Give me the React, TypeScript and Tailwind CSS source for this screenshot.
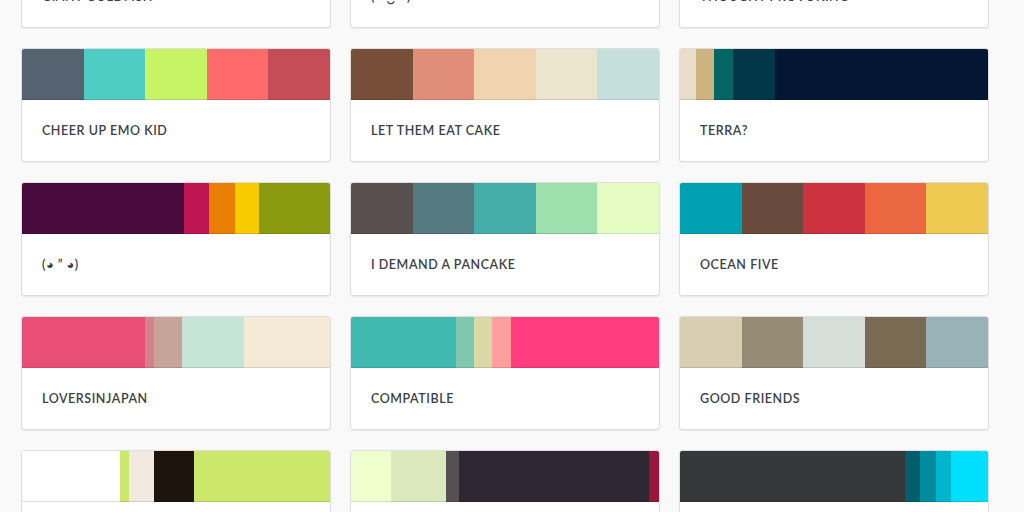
import React from "react";

type Swatch = { c: string; w: number };
type Palette = { name: string; colors: Swatch[] };

const eq = (cs: string[]): Swatch[] => cs.map((c) => ({ c, w: 20 }));

const palettes: Palette[] = [
  { name: "GIANT GOLDFISH", colors: eq(["#69D2E7", "#A7DBD8", "#E0E4CC", "#F38630", "#FA6900"]) },
  { name: "(◕ ‿ ◕)", colors: eq(["#FE4365", "#FC9D9A", "#F9CDAD", "#C8C8A9", "#83AF9B"]) },
  { name: "THOUGHT PROVOKING", colors: eq(["#ECD078", "#D95B43", "#C02942", "#542437", "#53777A"]) },
  { name: "CHEER UP EMO KID", colors: eq(["#556270", "#4ECDC4", "#C7F464", "#FF6B6B", "#C44D58"]) },
  { name: "LET THEM EAT CAKE", colors: eq(["#774F38", "#E08E79", "#F1D4AF", "#ECE5CE", "#C5E0DC"]) },
  {
    name: "TERRA?",
    colors: [
      { c: "#E8DDCB", w: 5.2 },
      { c: "#CDB380", w: 6 },
      { c: "#036564", w: 6 },
      { c: "#033649", w: 13.8 },
      { c: "#031634", w: 69 },
    ],
  },
  {
    name: "(◕ ” ◕)",
    colors: [
      { c: "#490A3D", w: 52.7 },
      { c: "#BD1550", w: 8 },
      { c: "#E97F02", w: 8.4 },
      { c: "#F8CA00", w: 7.9 },
      { c: "#8A9B0F", w: 23 },
    ],
  },
  { name: "I DEMAND A PANCAKE", colors: eq(["#594F4F", "#547980", "#45ADA8", "#9DE0AD", "#E5FCC2"]) },
  { name: "OCEAN FIVE", colors: eq(["#00A0B0", "#6A4A3C", "#CC333F", "#EB6841", "#EDC951"]) },
  {
    name: "LOVERSINJAPAN",
    colors: [
      { c: "#E94E77", w: 39.9 },
      { c: "#D68189", w: 3 },
      { c: "#C6A49A", w: 8.9 },
      { c: "#C6E5D9", w: 20.3 },
      { c: "#F4EAD5", w: 27.9 },
    ],
  },
  {
    name: "COMPATIBLE",
    colors: [
      { c: "#3FB8AF", w: 34 },
      { c: "#7FC7AF", w: 5.9 },
      { c: "#DAD8A7", w: 6 },
      { c: "#FF9E9D", w: 6 },
      { c: "#FF3D7F", w: 48.1 },
    ],
  },
  { name: "GOOD FRIENDS", colors: eq(["#D9CEB2", "#948C75", "#D5DED9", "#7A6A53", "#99B2B7"]) },
  {
    name: "HEADACHE",
    colors: [
      { c: "#FFFFFF", w: 31.8 },
      { c: "#CBE86B", w: 3 },
      { c: "#F2E9E1", w: 8.1 },
      { c: "#1C140D", w: 12.9 },
      { c: "#CBE86B", w: 44.2 },
    ],
  },
  {
    name: "SUNSET CAMPING",
    colors: [
      { c: "#EFFFCD", w: 13 },
      { c: "#DCE9BE", w: 18 },
      { c: "#555152", w: 4 },
      { c: "#2E2633", w: 61.8 },
      { c: "#99173C", w: 3.2 },
    ],
  },
  {
    name: "CAPSULE",
    colors: [
      { c: "#343838", w: 73 },
      { c: "#005F6B", w: 5 },
      { c: "#008C9E", w: 5 },
      { c: "#00B4CC", w: 5 },
      { c: "#00DFFC", w: 12 },
    ],
  },
];

function Card({ p }: { p: Palette }) {
  return (
    <div className="h-[114px] overflow-hidden rounded-[3px] border border-[#dedede] bg-white shadow-[0_1px_1px_rgba(0,0,0,0.06)] flex flex-col">
      <div className="flex h-[51px] shrink-0">
        {p.colors.map((s, i) => (
          <div
            key={i}
            className="h-full shadow-[inset_0_-1px_0_rgba(0,0,0,0.12)]"
            style={{ backgroundColor: s.c, width: `${s.w}%` }}
          />
        ))}
      </div>
      <div className="flex flex-1 items-center pl-[20px] pt-[2px]">
        <span className="font-['Lato',sans-serif] text-[12.5px] font-semibold tracking-[0.55px] text-[#3b4046]">
          {p.name}
        </span>
      </div>
    </div>
  );
}

export default function App() {
  return (
    <div className="h-[512px] w-full overflow-hidden bg-[#f9f9f9]">
      <div className="mt-[-86px] grid grid-cols-[310px_310px_310px] gap-x-[19px] gap-y-[20px] pl-[21px]">
        {palettes.map((p, i) => (
          <Card key={i} p={p} />
        ))}
      </div>
    </div>
  );
}
